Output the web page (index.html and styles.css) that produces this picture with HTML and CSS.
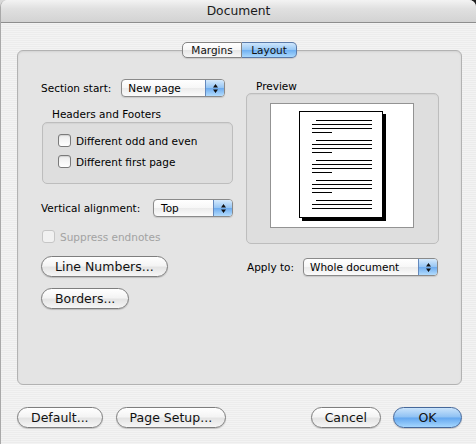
FILE: index.html
```html
<!DOCTYPE html>
<html>
<head>
<meta charset="utf-8">
<title>Document</title>
<link rel="stylesheet" href="styles.css">
</head>
<body>
<div class="window">
  <div class="titlebar">Document</div>
  <div class="content">
    <div class="tabs">
      <span class="tab tab-margins">Margins</span><span class="tab tab-layout tab-active">Layout</span>
    </div>
    <div class="panel">
      <div class="col col-left">
        <div class="row row-section">
          <span class="label">Section start:</span>
          <div class="popup popup-section">
            <span class="popup-text">New page</span>
            <span class="popup-arrows"><svg width="5" height="9" viewBox="0 0 5 9"><path d="M0 3.6L2.5 0L5 3.6Z M0 5.4L2.5 9L5 5.4Z" fill="#111"/></svg></span>
          </div>
        </div>
        <div class="group-title group-title-hf">Headers and Footers</div>
        <div class="group group-hf">
          <div class="check"><span class="box"></span><span>Different odd and even</span></div>
          <div class="check"><span class="box"></span><span>Different first page</span></div>
        </div>
        <div class="row row-valign">
          <span class="label">Vertical alignment:</span>
          <div class="popup popup-valign">
            <span class="popup-text">Top</span>
            <span class="popup-arrows"><svg width="5" height="9" viewBox="0 0 5 9"><path d="M0 3.6L2.5 0L5 3.6Z M0 5.4L2.5 9L5 5.4Z" fill="#111"/></svg></span>
          </div>
        </div>
        <div class="check check-disabled suppress"><span class="box"></span><span>Suppress endnotes</span></div>
        <button class="btn btn-line">Line Numbers...</button>
        <button class="btn btn-borders">Borders...</button>
      </div>
      <div class="col col-right">
        <div class="group-title group-title-preview">Preview</div>
        <div class="group group-preview">
          <div class="paper">
            <svg class="page" width="88" height="111" viewBox="0 0 88 111">
              <rect x="3" y="3" width="84" height="107" fill="#000"/>
              <rect x="0.5" y="0.5" width="83" height="106" fill="#fff" stroke="#000"/>
              <g fill="#000">
                <rect x="17" y="9" width="56" height="1"/>
                <rect x="13" y="13" width="60" height="1"/>
                <rect x="13" y="17" width="60" height="1"/>
                <rect x="13" y="21" width="20" height="1"/>
                <rect x="17" y="29" width="56" height="1"/>
                <rect x="13" y="33" width="60" height="1"/>
                <rect x="13" y="37" width="60" height="1"/>
                <rect x="13" y="41" width="20" height="1"/>
                <rect x="17" y="49" width="56" height="1"/>
                <rect x="13" y="53" width="60" height="1"/>
                <rect x="13" y="57" width="60" height="1"/>
                <rect x="13" y="61" width="20" height="1"/>
                <rect x="17" y="69" width="56" height="1"/>
                <rect x="13" y="73" width="60" height="1"/>
                <rect x="13" y="77" width="60" height="1"/>
                <rect x="13" y="81" width="20" height="1"/>
                <rect x="17" y="89" width="56" height="1"/>
                <rect x="13" y="93" width="60" height="1"/>
                <rect x="13" y="97" width="60" height="1"/>
              </g>
            </svg>
          </div>
        </div>
        <div class="row row-apply">
          <span class="label">Apply to:</span>
          <div class="popup popup-apply">
            <span class="popup-text">Whole document</span>
            <span class="popup-arrows"><svg width="5" height="9" viewBox="0 0 5 9"><path d="M0 3.6L2.5 0L5 3.6Z M0 5.4L2.5 9L5 5.4Z" fill="#111"/></svg></span>
          </div>
        </div>
      </div>
    </div>
    <div class="footer">
      <div class="footer-group">
        <button class="btn">Default...</button>
        <button class="btn">Page Setup...</button>
      </div>
      <div class="footer-group footer-group-right">
        <button class="btn">Cancel</button>
        <button class="btn btn-default">OK</button>
      </div>
    </div>
  </div>
</div>
</body>
</html>
```

FILE: styles.css
```css
* {
  box-sizing: border-box;
}

html,
body {
  margin: 0;
  padding: 0;
}

body {
  width: 476px;
  height: 444px;
  overflow: hidden;
  background: linear-gradient(to right, #d9d9d9 0, #d9d9d9 440px, #1e1e1e 468px);
  font-family: "DejaVu Sans", "Liberation Sans", sans-serif;
  font-size: 10.5px;
  color: #000;
}

.window {
  width: 476px;
  height: 444px;
  border-radius: 7px 7px 0 0;
  border-left: 1px solid #a9a9a9;
  overflow: hidden;
  display: flex;
  flex-direction: column;
  background: repeating-linear-gradient(to bottom, #ececec 0, #ececec 1px, #f3f3f3 1px, #f3f3f3 2px);
}

.titlebar {
  height: 23px;
  flex: none;
  border-bottom: 1px solid #8e8e8e;
  background: linear-gradient(#f3f3f3, #e0e0e0 40%, #d3d3d3);
  text-align: center;
  font-size: 12.3px;
  line-height: 23px;
  color: #1a1a1a;
}

.content {
  display: flex;
  flex-direction: column;
  padding: 19px 14px 0 16px;
}

/* segmented tabs */
.tabs {
  position: relative;
  z-index: 1;
  display: flex;
  justify-content: center;
  height: 16px;
  margin-bottom: -8px;
}

.tab {
  display: block;
  height: 16px;
  line-height: 14px;
  text-align: center;
  border: 1px solid #858585;
  color: #111;
  background: linear-gradient(#ffffff, #f6f6f6 50%, #e6e6e6 51%, #f7f7f7);
  box-shadow: 0 1px 1px rgba(0, 0, 0, 0.12);
}

.tab-margins {
  width: 60px;
  border-radius: 5px 0 0 5px;
}

.tab-layout {
  width: 55px;
  border-left: none;
  border-radius: 0 5px 5px 0;
}

.tab-active {
  border-color: #5b7aa8;
  background: linear-gradient(#cfe6fc, #98c8f5 48%, #6fb0f1 52%, #a9d8fd);
}

/* main panel */
.panel {
  display: flex;
  gap: 13px;
  height: 335px;
  padding: 28px 22px 0 23px;
  border: 1px solid #b2b2b2;
  border-radius: 6px;
  background: #e4e4e4;
  box-shadow: inset 0 1px 2px rgba(0, 0, 0, 0.08);
}

.col {
  display: flex;
  flex-direction: column;
  align-items: flex-start;
}

.col-left {
  width: 192px;
}

.col-right {
  width: 193px;
}

.row {
  display: flex;
  align-items: center;
  height: 18px;
}

.label {
  white-space: nowrap;
}

.row-section {
  gap: 10px;
}

.row-valign {
  width: 192px;
  margin-top: 15px;
}

.row-apply {
  gap: 9px;
  margin-top: 14px;
  margin-left: 1px;
}

/* popups */
.popup {
  display: flex;
  height: 18px;
  border: 1px solid #8a8a8a;
  border-radius: 4px;
  overflow: hidden;
  background: linear-gradient(#ffffff, #f7f7f7 50%, #ebebeb 51%, #fbfbfb);
  box-shadow: 0 1px 1px rgba(0, 0, 0, 0.12);
}

.popup-section {
  width: 104px;
}

.popup-valign {
  width: 80px;
  margin-left: auto;
}

.popup-apply {
  width: 135px;
}

.popup-text {
  flex: 1;
  padding-left: 6px;
  line-height: 16px;
  white-space: nowrap;
}

.popup-valign .popup-text {
  padding-left: 7px;
}

.popup-arrows {
  width: 19px;
  display: flex;
  align-items: center;
  justify-content: center;
  border-left: 1px solid #6489bd;
  background: linear-gradient(#d6eafc, #97c6f4 48%, #6eacef 52%, #b3dcfd);
}

/* groups */
.group-title {
  line-height: 13px;
  padding-left: 10px;
}

.group-title-hf {
  margin-top: 11px;
  margin-bottom: 1px;
  padding-left: 11px;
}

.group-title-preview {
  margin-top: 1px;
}

.group {
  border: 1px solid #bdbdbd;
  border-radius: 5px;
  background: rgba(0, 0, 0, 0.025);
  box-shadow: inset 0 1px 1px rgba(0, 0, 0, 0.05);
}

.group-hf {
  width: 191px;
  height: 62px;
  margin-left: 1px;
  padding: 11px 0 0 15px;
  display: flex;
  flex-direction: column;
  gap: 8px;
}

.group-preview {
  width: 193px;
  height: 151px;
  padding: 9px 0 0 23px;
}

.paper {
  width: 144px;
  height: 125px;
  border: 1px solid #939393;
  background: #fff;
  padding: 7px 0 0 28px;
}

.page {
  display: block;
}

/* checkboxes */
.check {
  display: flex;
  align-items: center;
  gap: 5px;
  height: 13px;
  white-space: nowrap;
}

.box {
  width: 13px;
  height: 13px;
  flex: none;
  border: 1px solid #7a7a7a;
  border-radius: 3px;
  background: linear-gradient(#ececec, #ffffff);
  box-shadow: inset 0 1px 1px rgba(0, 0, 0, 0.12);
}

.suppress {
  margin-top: 13px;
  margin-left: 1px;
}

.check-disabled {
  color: #a2a2a2;
}

.check-disabled .box {
  border-color: #c6c6c6;
  background: #f1f1f1;
  box-shadow: none;
}

/* buttons */
.btn {
  display: block;
  height: 21px;
  margin: 0;
  padding: 0 13px;
  border: 1px solid #7e7e7e;
  border-radius: 11px;
  font-family: "DejaVu Sans", "Liberation Sans", sans-serif;
  font-size: 12.5px;
  line-height: 19px;
  color: #111;
  white-space: nowrap;
  background: linear-gradient(#ffffff, #f4f4f4 45%, #e4e4e4 55%, #f6f6f6);
  box-shadow: 0 1px 1px rgba(0, 0, 0, 0.18);
}

.btn-line {
  margin-top: 13px;
}

.btn-borders {
  margin-top: 11px;
}

.btn-default {
  min-width: 69px;
  border-color: #46689a;
  background: linear-gradient(#c9e3fb, #8fc1f3 48%, #64a7ef 52%, #a4d6fe);
}

.footer {
  display: flex;
  justify-content: space-between;
  margin-top: 22px;
}

.footer-group {
  display: flex;
  gap: 13px;
}

.footer-group-right {
  gap: 12px;
}
```
